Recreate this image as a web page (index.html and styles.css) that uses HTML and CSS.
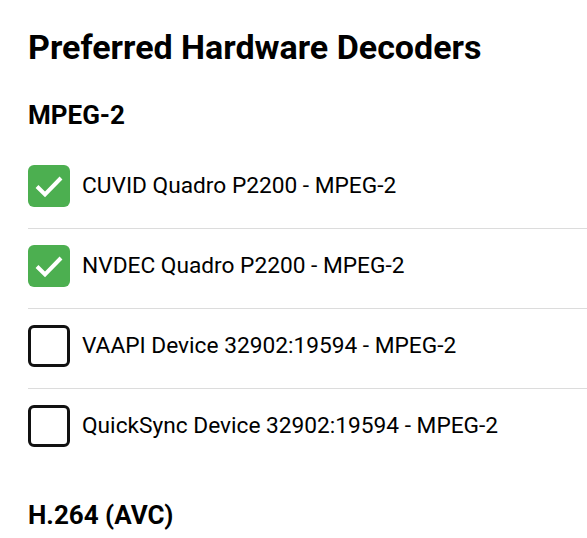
FILE: index.html
```html
<!DOCTYPE html>
<html lang="en">
<head>
  <meta charset="UTF-8" />
  <title>Preferred Hardware Decoders</title>
  <link rel="stylesheet" href="styles.css">
</head>
<body>
  <div class="page">
    <h2 class="title">Preferred Hardware Decoders</h2>

    <!-- MPEG-2 -->
    <h3 class="codec">MPEG-2</h3>
    <ul class="decoders">
      <li class="decoder">
        <span class="box checked">
          <svg viewBox="0 0 42 42"><path d="M9 21.5l8 8L33 13" /></svg>
        </span>
        <span class="name">CUVID Quadro P2200 - MPEG-2</span>
      </li>
      <li class="decoder">
        <span class="box checked">
          <svg viewBox="0 0 42 42"><path d="M9 21.5l8 8L33 13" /></svg>
        </span>
        <span class="name">NVDEC Quadro P2200 - MPEG-2</span>
      </li>
      <li class="decoder">
        <span class="box"></span>
        <span class="name">VAAPI Device 32902:19594 - MPEG-2</span>
      </li>
      <li class="decoder">
        <span class="box"></span>
        <span class="name">QuickSync Device 32902:19594 - MPEG-2</span>
      </li>
    </ul>

    <h3 class="codec">H.264 (AVC)</h3>
  </div>
</body>
</html>
```

FILE: styles.css
```css
body {
  margin: 0;
  background: #fff;
  color: #000;
  font-family: 'Roboto', 'Liberation Sans', sans-serif;
  overflow: hidden;
}

.page {
  padding: 27px 0 0 28px;
}

.title {
  font-size: 34px;
  font-weight: 700;
  margin: 0 0 33px;
  line-height: 40px;
}

.codec {
  font-size: 26px;
  font-weight: 700;
  margin: 0 0 19px;
  line-height: 30px;
}

.decoders {
  list-style: none;
  margin: 0 0 32px;
  padding: 0;
}

.decoder {
  display: flex;
  align-items: center;
  gap: 12px;
  padding: 16px 0 21px;
  border-bottom: 1px solid #dcdcdc;
}

.decoder:last-child {
  border-bottom: none;
}

.box {
  flex: none;
  width: 42px;
  height: 42px;
  box-sizing: border-box;
  border: 3px solid #111;
  border-radius: 6px;
}

.box.checked {
  background: #4caf50;
  border: none;
}

.box svg {
  display: block;
  width: 42px;
  height: 42px;
  fill: none;
  stroke: #fff;
  stroke-width: 4;
}

.name {
  font-size: 22.7px;
  line-height: 42px;
}
```
